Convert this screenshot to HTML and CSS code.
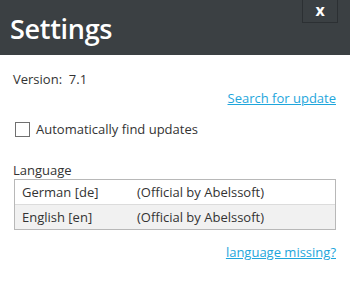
FILE: index.html
```html
<!DOCTYPE html>
<html lang="en">
<head>
    <meta charset="UTF-8">
    <title>Settings</title>
    <link rel="stylesheet" href="styles.css">
</head>
<body>
    <div class="title-bar">
        <h1>Settings</h1>
        <button class="close-btn">x</button>
    </div>

    <div class="content">
        <div class="version">Version:&nbsp; 7.1</div>
        <div class="link-row"><a href="#">Search for update</a></div>

        <label class="check-row">
            <span class="checkbox"></span>
            Automatically find updates
        </label>

        <div class="lang-label">Language</div>
        <div class="lang-list">
            <div class="lang-item">
                <span class="lang-name">German [de]</span>
                <span>(Official by Abelssoft)</span>
            </div>
            <div class="lang-item selected">
                <span class="lang-name">English [en]</span>
                <span>(Official by Abelssoft)</span>
            </div>
        </div>
        <div class="link-row missing"><a href="#">language missing?</a></div>
    </div>
</body>
</html>
```

FILE: styles.css
```css
body {
    margin: 0;
    padding: 0;
    background: #ffffff;
    color: #333333;
    font-family: "Open Sans", "Noto Sans", sans-serif;
    font-size: 13px;
}
.title-bar {
    background-color: #3b4043;
    height: 55px;
    display: flex;
    justify-content: space-between;
    align-items: flex-start;
    padding: 0 12px 0 10px;
}
.title-bar h1 {
    margin: 11px 0 0 0;
    color: #ffffff;
    font-size: 27px;
    font-weight: 600;
    line-height: 36px;
    letter-spacing: -0.3px;
}
.close-btn {
    width: 36px;
    height: 23px;
    background: transparent;
    border: 1px solid #2c3033;
    border-top: none;
    color: #ffffff;
    font-family: "Open Sans", sans-serif;
    font-weight: 700;
    font-size: 16px;
    line-height: 16px;
    padding: 0 0 3px 0;
}
.content {
    padding: 15px 14px 0 13px;
}
.version {
    line-height: 18px;
}
.link-row {
    display: flex;
    justify-content: flex-end;
    line-height: 18px;
    margin-top: 1px;
}
.link-row a {
    color: #1ea6dc;
    text-decoration: underline;
}
.check-row {
    display: flex;
    align-items: center;
    gap: 6px;
    margin: 13px 0 0 2px;
    line-height: 18px;
}
.checkbox {
    width: 13px;
    height: 13px;
    border: 1px solid #707070;
    background: #ffffff;
}
.lang-label {
    margin-top: 23px;
    line-height: 18px;
}
.lang-list {
    border: 1px solid #b8b8b8;
    margin: 0 0 0 1px;
}
.lang-item {
    display: flex;
    height: 24px;
    align-items: center;
    padding-left: 7px;
}
.lang-item.selected {
    background: #f1f1f1;
    border-top: 1px solid #dcdcdc;
}
.lang-name {
    width: 115px;
}
.missing {
    margin-top: 13px;
}
```
